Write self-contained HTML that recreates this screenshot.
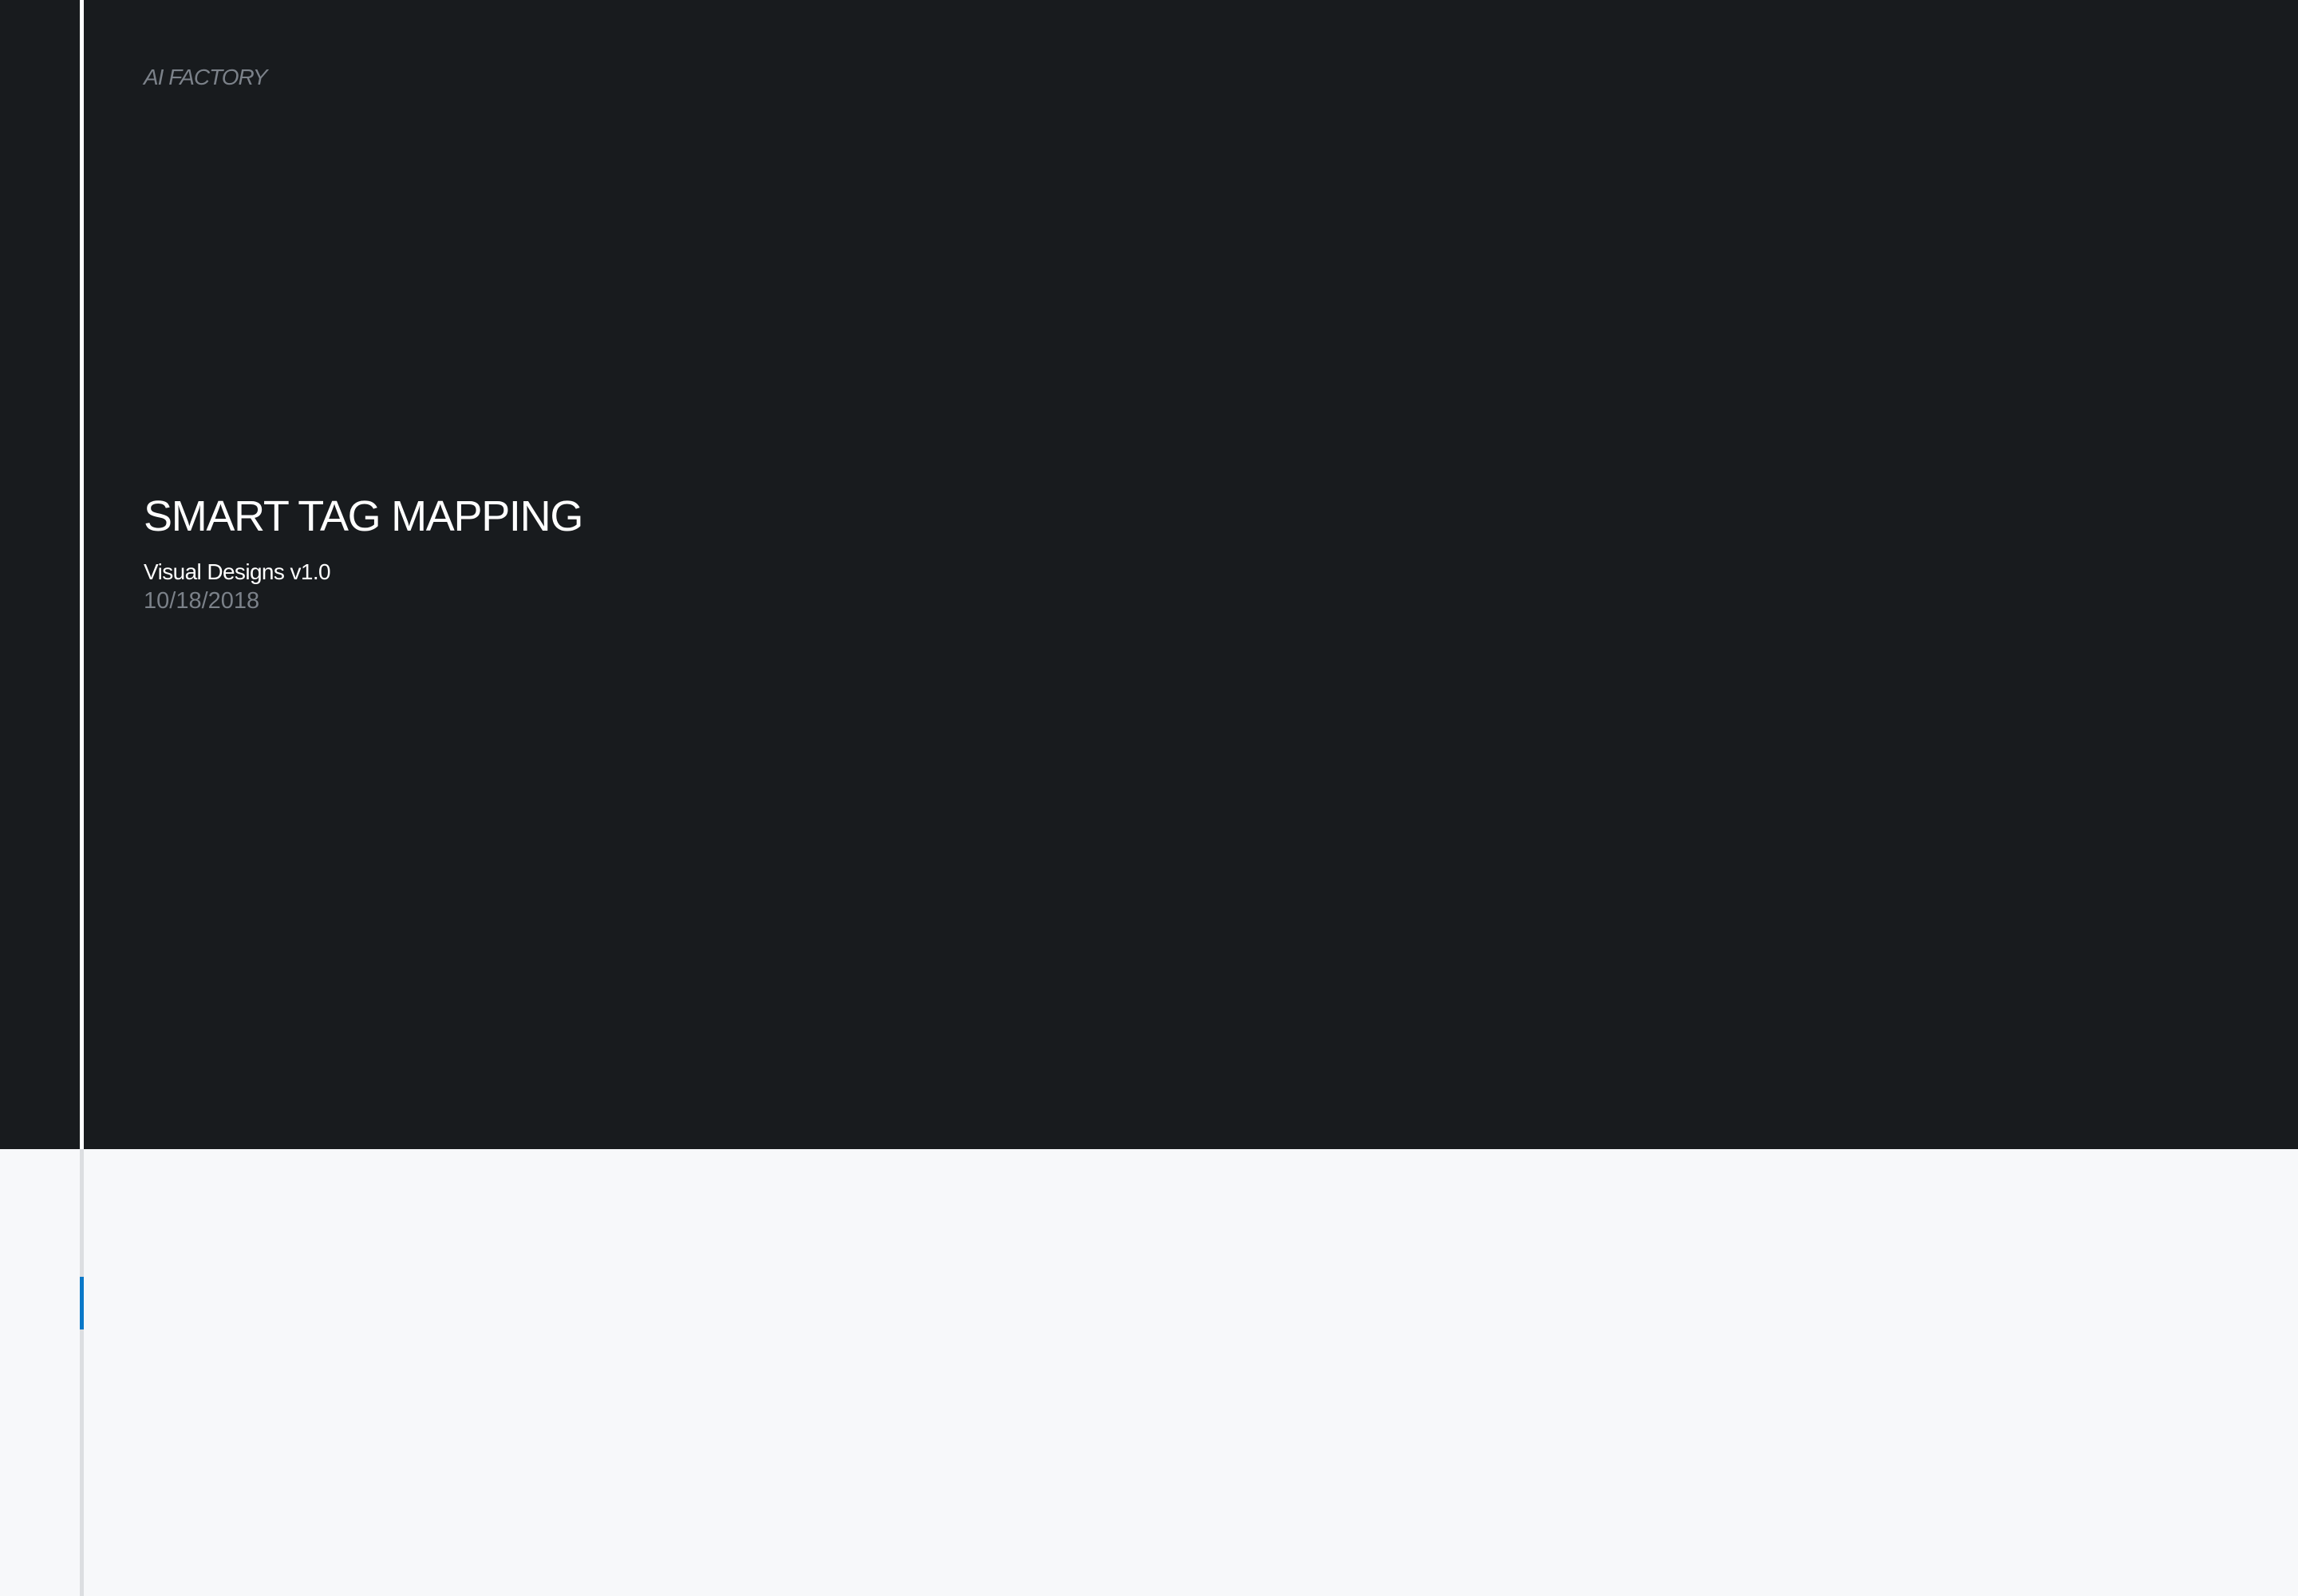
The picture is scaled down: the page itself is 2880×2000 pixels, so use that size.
<!DOCTYPE html>
<html><head><meta charset="utf-8"><style>
html,body{margin:0;padding:0;}
body{width:2880px;height:2000px;position:relative;overflow:hidden;background:#f7f8fa;font-family:"Liberation Sans",sans-serif;}
.dark{position:absolute;left:0;top:0;width:2880px;height:1440px;background:#181b1e;}
.wl{position:absolute;left:100px;top:0;width:5px;height:1440px;background:#ffffff;}
.gl{position:absolute;left:100px;top:1440px;width:5px;height:560px;background:#dcdee1;}
.bl{position:absolute;left:100px;top:1600px;width:5px;height:66px;background:#0a78c8;}
.t{position:absolute;left:180px;white-space:nowrap;line-height:1;}
</style></head><body>
<div class="dark"></div>
<div class="wl"></div>
<div class="gl"></div>
<div class="bl"></div>
<div class="t" style="top:83px;font-size:28px;font-style:italic;color:#7b8189;letter-spacing:-1px;">AI FACTORY</div>
<div class="t" style="top:620px;font-size:54px;color:#ffffff;letter-spacing:-1.3px;">SMART TAG MAPPING</div>
<div class="t" style="top:703px;font-size:28px;color:#ffffff;letter-spacing:-0.6px;">Visual Designs v1.0</div>
<div class="t" style="top:739px;font-size:29px;color:#7b8189;">10/18/2018</div>
</body></html>
